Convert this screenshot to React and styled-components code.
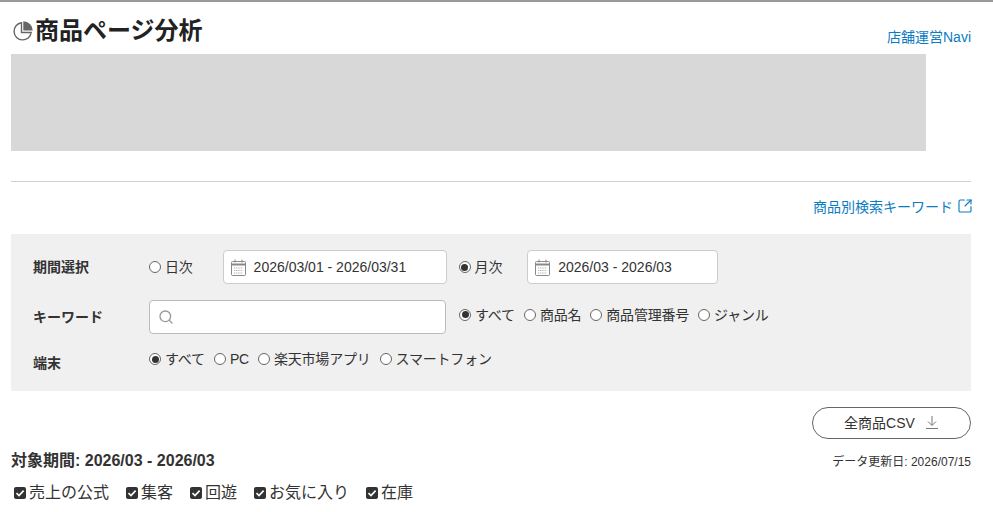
import React from 'react';
import styled, { createGlobalStyle } from 'styled-components';
import { Search, SquareArrowOutUpRight } from 'lucide-react';

const Global = createGlobalStyle`
  html, body {
    margin: 0;
    padding: 0;
    background: #fff;
    font-family: "Liberation Sans", "Noto Sans CJK JP", sans-serif;
    color: #333;
  }
`;

const Page = styled.div`
  width: 993px;
  height: 512px;
  overflow: hidden;
  box-sizing: border-box;
  border-top: 2px solid #999;
  padding: 0 22px 0 11px;
`;

const Header = styled.div`
  display: flex;
  justify-content: space-between;
  align-items: flex-end;
  height: 52px;
`;

const Title = styled.h1`
  display: flex;
  align-items: center;
  gap: 1px;
  margin: 0 0 0 1px;
  font-size: 24px;
  line-height: 46px;
  height: 46px;
  font-weight: 700;
  color: #222;
`;

const NaviLink = styled.a`
  font-size: 14px;
  line-height: 16px;
  margin-bottom: 9px;
  color: #0b7cc4;
`;

const Banner = styled.div`
  width: 915px;
  height: 97px;
  background: #d8d8d8;
`;

const Divider = styled.hr`
  margin: 30px 0 0;
  border: 0;
  border-top: 1px solid #d2d2d2;
`;

const KeywordLinkRow = styled.div`
  display: flex;
  justify-content: flex-end;
  margin-top: 15px;
  height: 37px;
`;

const KeywordLink = styled.a`
  display: flex;
  align-items: center;
  gap: 4px;
  height: 18px;
  font-size: 14px;
  color: #0b7cc4;
`;

const ExternalIcon = styled(SquareArrowOutUpRight)`
  margin-right: -2px;
`;

const Panel = styled.div`
  height: 157px;
  box-sizing: border-box;
  padding: 16px 22px 0;
  background: #f0f0f0;
`;

const Row = styled.div`
  display: flex;
  align-items: center;
  height: ${(p) => p.$height}px;
  margin-bottom: ${(p) => p.$gap || 0}px;
`;

const RowLabel = styled.div`
  width: 116px;
  flex: none;
  font-size: 14px;
  font-weight: 700;
  color: #333;
  transform: translateY(${(p) => p.$shift || 0}px);
`;

const RadioGroup = styled.div`
  display: flex;
  align-items: center;
  margin-bottom: ${(p) => p.$lift || 0}px;
`;

const RadioItem = styled.label`
  display: flex;
  align-items: center;
  gap: 4px;
  margin-right: ${(p) => p.$gap ?? 9}px;
  font-size: 14px;
  line-height: 20px;
  letter-spacing: -0.2px;
  color: #333;
  white-space: nowrap;
`;

const RadioDot = styled.span`
  position: relative;
  display: block;
  width: 12px;
  height: 12px;
  flex: none;
  box-sizing: border-box;
  border: 1px solid #666;
  border-radius: 50%;
  background: #fff;
  &::after {
    content: "";
    display: ${(p) => (p.$on ? 'block' : 'none')};
    position: absolute;
    top: 1.5px;
    left: 1.5px;
    width: 7px;
    height: 7px;
    border-radius: 50%;
    background: #333;
  }
`;

const DateBox = styled.div`
  display: flex;
  align-items: center;
  gap: 8px;
  box-sizing: border-box;
  width: ${(p) => p.$width}px;
  height: 34px;
  margin-right: 12px;
  padding-left: 7px;
  background: #fff;
  border: 1px solid #ccc;
  border-radius: 4px;
  font-size: 14px;
  color: #333;
`;

const SearchBox = styled.div`
  display: flex;
  align-items: center;
  box-sizing: border-box;
  width: 297px;
  height: 34px;
  margin-right: 13px;
  padding-left: 8px;
  background: #fff;
  border: 1px solid #bbb;
  border-radius: 4px;
`;

const ActionRow = styled.div`
  display: flex;
  justify-content: flex-end;
  margin-top: 16px;
`;

const CsvButton = styled.button`
  display: flex;
  align-items: center;
  justify-content: center;
  gap: 10px;
  width: 159px;
  height: 32px;
  padding: 0 0 2px;
  background: #fff;
  border: 1px solid #666;
  border-radius: 16px;
  font-family: inherit;
  font-size: 14px;
  color: #333;
`;

const PeriodRow = styled.div`
  display: flex;
  justify-content: space-between;
  align-items: center;
  margin-top: 11px;
  height: 22px;
`;

const Period = styled.div`
  font-size: 16px;
  line-height: 22px;
  font-weight: 700;
  color: #333;
`;

const UpdatedAt = styled.div`
  margin-bottom: 2px;
  font-size: 12px;
  color: #333;
`;

const CheckRow = styled.div`
  display: flex;
  gap: 17px;
  margin: 11px 0 0 3px;
`;

const CheckItem = styled.label`
  display: flex;
  align-items: center;
  gap: 3px;
  font-size: 16px;
  line-height: 20px;
  color: #333;
`;

const CheckBox = styled.span`
  display: flex;
  align-items: center;
  justify-content: center;
  width: 12px;
  height: 12px;
  border-radius: 2px;
  background: #333;
`;

const PieIcon = () => (
  <svg width="22" height="22" viewBox="0 0 22 22" fill="none">
    <path d="M9.5 2.8a8.6 8.6 0 1 0 9.7 9.7H9.5Z" stroke="#666" strokeWidth="1.4" />
    <path d="M11.3 1.2a9.4 9.4 0 0 1 9.4 9.4h-9.4Z" fill="#666" />
  </svg>
);

const CalendarIcon = () => (
  <svg width="15" height="17" viewBox="0 0 15 17" fill="none">
    <rect x="0.5" y="2.5" width="14" height="14" rx="1" stroke="#888" />
    <path d="M1 5.5h13" stroke="#888" strokeWidth="2" />
    <path d="M4 0.5v3M11 0.5v3" stroke="#888" />
    <path d="M3 9h9M3 11.5h9M3 14h9" stroke="#aaa" strokeDasharray="1.2 1" />
  </svg>
);

const DownloadIcon = () => (
  <svg width="14" height="14" viewBox="0 0 14 14" fill="none" stroke="#777">
    <path d="M7 1v9M3 6.5 7 10.5 11 6.5M1 13.5h12" />
  </svg>
);

const CheckMark = () => (
  <svg width="10" height="10" viewBox="0 0 10 10" fill="none">
    <path d="M1.5 5.2 4 7.6 8.6 2.6" stroke="#fff" strokeWidth="1.6" />
  </svg>
);

const Radio = ({ on, gap, children }) => (
  <RadioItem $gap={gap}>
    <RadioDot $on={on} />
    {children}
  </RadioItem>
);

const checks = ['売上の公式', '集客', '回遊', 'お気に入り', '在庫'];

export default function App() {
  return (
    <Page>
      <Global />
      <Header>
        <Title>
          <PieIcon />
          商品ページ分析
        </Title>
        <NaviLink>店舗運営Navi</NaviLink>
      </Header>
      <Banner />
      <Divider />
      <KeywordLinkRow>
        <KeywordLink>
          商品別検索キーワード
          <ExternalIcon size={16} strokeWidth={1.7} />
        </KeywordLink>
      </KeywordLinkRow>
      <Panel>
        <Row $height={34} $gap={16}>
          <RowLabel $shift={-1}>期間選択</RowLabel>
          <Radio gap={30}>日次</Radio>
          <DateBox $width={224}>
            <CalendarIcon />
            2026/03/01 - 2026/03/31
          </DateBox>
          <Radio on gap={25}>月次</Radio>
          <DateBox $width={191}>
            <CalendarIcon />
            2026/03 - 2026/03
          </DateBox>
        </Row>
        <Row $height={34} $gap={14}>
          <RowLabel $shift={-1}>キーワード</RowLabel>
          <SearchBox>
            <Search size={16} color="#999" strokeWidth={2} />
          </SearchBox>
          <RadioGroup $lift={5}>
            <Radio on>すべて</Radio>
            <Radio>商品名</Radio>
            <Radio>商品管理番号</Radio>
            <Radio>ジャンル</Radio>
          </RadioGroup>
        </Row>
        <Row $height={22}>
          <RowLabel $shift={3}>端末</RowLabel>
          <Radio on>すべて</Radio>
          <Radio>PC</Radio>
          <Radio>楽天市場アプリ</Radio>
          <Radio>スマートフォン</Radio>
        </Row>
      </Panel>
      <ActionRow>
        <CsvButton>
          全商品CSV
          <DownloadIcon />
        </CsvButton>
      </ActionRow>
      <PeriodRow>
        <Period>対象期間: 2026/03 - 2026/03</Period>
        <UpdatedAt>データ更新日: 2026/07/15</UpdatedAt>
      </PeriodRow>
      <CheckRow>
        {checks.map((name) => (
          <CheckItem key={name}>
            <CheckBox>
              <CheckMark />
            </CheckBox>
            {name}
          </CheckItem>
        ))}
      </CheckRow>
    </Page>
  );
}
